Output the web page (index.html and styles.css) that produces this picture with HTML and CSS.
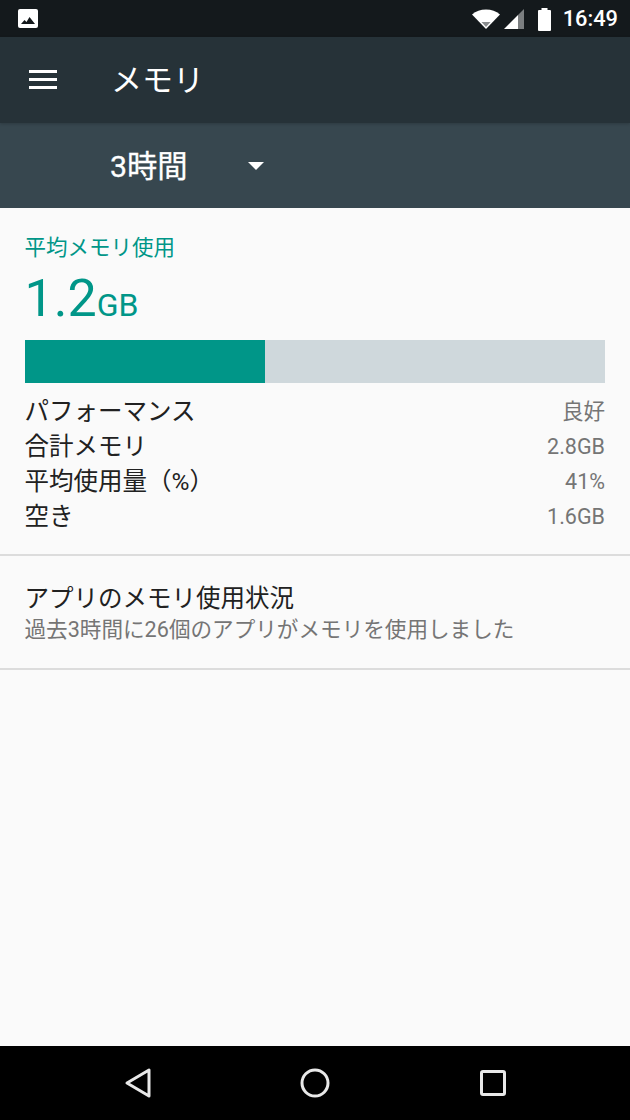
FILE: index.html
```html
<!DOCTYPE html>
<html>
	<head>
		<meta charset="utf-8" />
		<title>メモリ</title>
		<link rel="stylesheet" href="styles.css">
	</head>
	<body>
		<div id="wrap">
			<!--ステータスバー-->
			<div class="status">
				<svg class="pic-icon" width="22" height="21" viewBox="0 0 22 21">
					<rect x="1" y="1" width="20" height="19" rx="2" fill="#fff"/>
					<path d="M4 16l3.500-4 2 2 3-5 5.500 7z" fill="#14191c"/>
				</svg>
				<div class="status-right">
					<svg width="30" height="22" viewBox="0 0 30 22">
						<path d="M1 6.500C5 3 9.500 1.500 15 1.500S25 3 29 6.500L15 21z" fill="#fff"/>
						<path d="M10.500 14h9L15 19z" fill="#8a8d8f"/>
					</svg>
					<svg width="22" height="22" viewBox="0 0 22 22">
						<path d="M1 21L15 7v14z" fill="#fff"/>
						<path d="M15 7l6-6v20h-6z" fill="#7b7e80"/>
					</svg>
					<svg class="battery" width="15" height="24" viewBox="0 0 15 24">
						<path d="M4.500 3V1h6v2H13a1 1 0 0 1 1 1v19a1 1 0 0 1-1 1H2a1 1 0 0 1-1-1V4a1 1 0 0 1 1-1z" fill="#fff"/>
					</svg>
					<span class="clock">16:49</span>
				</div>
			</div>

			<div class="toolbar">
				<div class="menu-icon"><i></i><i></i><i></i></div>
				<div class="title">メモリ</div>
			</div>

			<div class="spinner">
				<span class="spinner-text">3時間</span>
				<span class="arrow"></span>
			</div>

			<div class="content">
				<div class="summary">
					<div class="label">平均メモリ使用</div>
					<div class="big"><span class="num">1.2</span><span class="unit">GB</span></div>
					<div class="bar"><div class="bar-fill" style="width: 41.4%"></div></div>
					<ul class="rows">
						<li><span>パフォーマンス</span><span class="val">良好</span></li>
						<li><span>合計メモリ</span><span class="val digits">2.8GB</span></li>
						<li><span>平均使用量（%）</span><span class="val digits">41%</span></li>
						<li><span>空き</span><span class="val digits">1.6GB</span></li>
					</ul>
				</div>
				<div class="apps">
					<div class="apps-title">アプリのメモリ使用状況</div>
					<div class="apps-sub">過去3時間に26個のアプリがメモリを使用しました</div>
				</div>
			</div>

			<!--ナビゲーションバー-->
			<div class="nav">
				<svg width="30" height="32" viewBox="0 0 30 32">
					<path d="M26 3v26L4 16z" fill="none" stroke="#e8e8e8" stroke-width="3" stroke-linejoin="round"/>
				</svg>
				<svg class="home" width="30" height="30" viewBox="0 0 30 30">
					<circle cx="15" cy="15" r="13" fill="none" stroke="#e8e8e8" stroke-width="3"/>
				</svg>
				<svg width="26" height="26" viewBox="0 0 26 26">
					<rect x="1.500" y="1.500" width="23" height="23" rx="1.500" fill="none" stroke="#e8e8e8" stroke-width="3"/>
				</svg>
			</div>
		</div>
	</body>
</html>
```

FILE: styles.css
```css
*{
	padding: 0;
	margin: 0;
	box-sizing: border-box;
}
ul{
	list-style: none;
}
body{
	font-family: Roboto, "Noto Sans CJK JP", sans-serif;
}
#wrap{
	width: 630px;
	height: 1120px;
	display: flex;
	flex-direction: column;
	background-color: #fafafa;
}

/*ステータスバー*/
.status{
	height: 37px;
	flex: none;
	background-color: #14191c;
	display: flex;
	align-items: center;
	justify-content: space-between;
	padding: 0 12px 0 17px;
}
.status svg{
	display: block;
}
.status-right{
	display: flex;
	align-items: center;
}
.status-right svg:nth-child(2){
	margin-left: 2px;
}
.battery{
	margin-left: 12px;
}
.clock{
	margin-left: 11px;
	color: #fff;
	font-size: 21.8px;
	font-weight: 500;
}

.toolbar{
	height: 86px;
	flex: none;
	background-color: #263238;
	display: flex;
	align-items: center;
	padding: 0 0 2px 29px;
	box-shadow: 0 1px 3px rgba(0, 0, 0, .2);
	position: relative;
}
.menu-icon{
	width: 28px;
	display: flex;
	flex-direction: column;
	gap: 5px;
}
.menu-icon i{
	display: block;
	height: 3px;
	background-color: #fff;
}
.title{
	margin-left: 54px;
	padding-bottom: 4px;
	color: #fff;
	font-size: 31px;
}

.spinner{
	height: 85px;
	flex: none;
	background-color: #37474f;
	display: flex;
	align-items: center;
	padding-left: 110px;
}
.spinner-text{
	padding-bottom: 4px;
	color: #fff;
	font-size: 30.3px;
	-webkit-text-stroke: .3px #fff;
}
.arrow{
	margin-left: 60px;
	border: 8px solid transparent;
	border-top-color: #fff;
	border-bottom-width: 0;
}

.content{
	flex: 1;
}
.summary{
	padding: 27px 25px 22px 24.5px;
	border-bottom: 2px solid #dcdcdc;
}
.label{
	color: #009688;
	font-size: 21.5px;
	line-height: 26px;
	margin-bottom: 2px;
}
.big{
	color: #009688;
	line-height: 72px;
	height: 77px;
}
.num{
	font-size: 52px;
}
.unit{
	font-size: 32px;
}
.bar{
	height: 43px;
	background-color: #cfd8dc;
}
.bar-fill{
	height: 100%;
	background-color: #009688;
}
.rows{
	margin-top: 9px;
}
.rows li{
	display: flex;
	justify-content: space-between;
	align-items: center;
	height: 35px;
	color: #212121;
	font-size: 24.5px;
}
.val{
	color: #757575;
	font-size: 21.5px;
}
.digits{
	padding-top: 3px;
}
.apps{
	height: 114px;
	padding: 26px 25px 0 24.5px;
	border-bottom: 2px solid #dcdcdc;
}
.apps-title{
	color: #212121;
	font-size: 24.5px;
	line-height: 34px;
}
.apps-sub{
	color: #757575;
	font-size: 21.6px;
	line-height: 28px;
}

.nav{
	height: 74px;
	flex: none;
	background-color: #000;
	display: flex;
	align-items: center;
	padding: 0 124px 0 123px;
	justify-content: space-between;
}
.home{
	margin-right: 3px;
}
```
